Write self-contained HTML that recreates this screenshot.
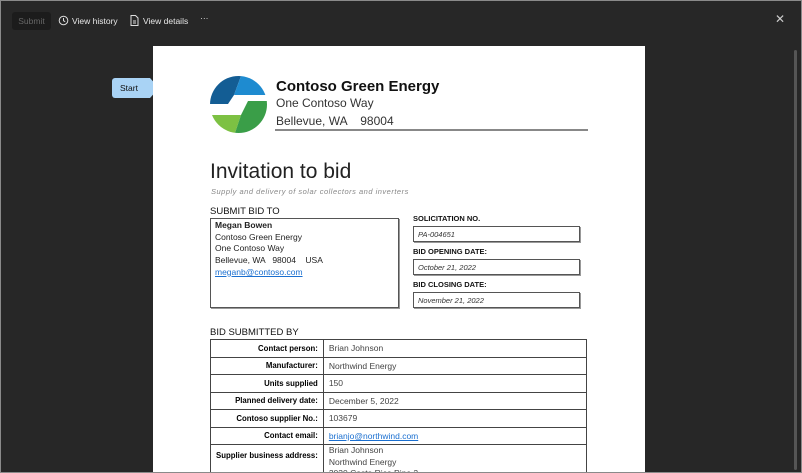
<!DOCTYPE html>
<html style="overflow:hidden"><head><style>
*{margin:0;padding:0;box-sizing:border-box}
html,body{width:802px;height:473px;overflow:hidden}
body{background:#272727;position:relative;font-family:"Liberation Sans",sans-serif}
.frame{position:absolute;left:0;top:0;width:802px;height:473px;border:1px solid #8a8a8a;pointer-events:none}
.a{position:absolute}
.tb{color:#e8e8e8;font-size:8.5px;top:16px}
.page{left:153px;top:46px;width:492px;height:427px;background:#fff}
.p{color:#111;font-family:"Liberation Sans",sans-serif}
.box{border:1px solid #555;box-shadow:1px 1px 0 #999}
table{border-collapse:collapse;position:absolute;left:210px;top:339px;width:377px;font-size:8.5px}
td{border:1px solid #444;height:17.5px;padding:0 5px}
td.l{text-align:right;font-weight:bold;width:112px;font-size:7.8px;white-space:nowrap}
td.v{color:#444}
a{color:#1a6fd0;text-decoration:underline}
</style></head><body>
<div class="a" style="left:12px;top:12px;width:39px;height:18px;background:#1c1c1c;border-radius:3px;color:#666;font-size:8.5px;text-align:center;line-height:18px">Submit</div>
<svg class="a" style="left:58px;top:15px" width="11" height="11" viewBox="0 0 11 11"><circle cx="5.5" cy="5.5" r="4.3" fill="none" stroke="#ddd" stroke-width="1"/><path d="M5.5 3v2.7l1.7 1" fill="none" stroke="#ddd"/></svg>
<div class="a tb" style="left:72px">View history</div>
<svg class="a" style="left:130px;top:15px" width="9" height="11" viewBox="0 0 9 11"><path d="M1 .5h4.5L8 3v7.5H1z" fill="none" stroke="#ddd"/><path d="M3 6h3M3 8h3" stroke="#ddd"/></svg>
<div class="a tb" style="left:143px">View details</div>
<div class="a tb" style="left:200px;top:13px">···</div>
<div class="a" style="left:775px;top:12px;color:#ccc;font-size:12px">✕</div>
<div class="a" style="left:794px;top:50px;width:3px;height:420px;background:#555;border-radius:2px"></div>
<div class="a" style="left:112px;top:78px;width:38px;height:20px;background:#a9d3f5;border-radius:3px 0 0 3px;font-size:8.5px;line-height:20px;padding-left:8px;color:#111">Start</div>
<div class="a" style="left:150px;top:78px;width:0;height:0;border-top:10px solid transparent;border-bottom:10px solid transparent;border-left:9px solid #a9d3f5"></div>
<div class="a page"></div>
<svg class="a" style="left:210px;top:76px" width="57" height="57" viewBox="0 0 57 57">
<defs><clipPath id="c"><circle cx="28.5" cy="28.5" r="28.5"/></clipPath></defs>
<g clip-path="url(#c)">
<polygon points="0,0 31,0 24,19 18,28 0,28" fill="#135d94"/>
<polygon points="31,0 57,0 57,19 24,19" fill="#1e8bd0"/>
<polygon points="0,39 31,39 25,57 0,57" fill="#7dc143"/>
<polygon points="38,25 57,25 57,57 25,57 31,39" fill="#3a9e48"/>
</g></svg>
<div class="a p" style="left:276px;top:78px;font-size:15px;font-weight:bold">Contoso Green Energy</div>
<div class="a p" style="left:276px;top:96px;font-size:12px;color:#333">One Contoso Way</div>
<div class="a p" style="left:276px;top:114px;font-size:12px;color:#333">Bellevue, WA &nbsp;&nbsp; 98004</div>
<div class="a" style="left:275px;top:129px;width:313px;height:2px;background:#888"></div>
<div class="a p" style="left:210px;top:160px;font-size:21px;color:#222">Invitation to bid</div>
<div class="a" style="left:211px;top:187px;font-size:7.5px;font-style:italic;color:#888;letter-spacing:.5px">Supply and delivery of solar collectors and inverters</div>
<div class="a p" style="left:210px;top:206px;font-size:9.5px">SUBMIT BID TO</div>
<div class="a box" style="left:210px;top:218px;width:189px;height:90px"></div>
<div class="a p" style="left:215px;top:220px;font-size:8.5px;line-height:11.7px;color:#222"><b>Megan Bowen</b><br>Contoso Green Energy<br>One Contoso Way<br>Bellevue, WA &nbsp; 98004 &nbsp;&nbsp; USA<br><a>meganb@contoso.com</a></div>
<div class="a p" style="left:413px;top:214px;font-size:7.5px;font-weight:bold">SOLICITATION NO.</div>
<div class="a box" style="left:413px;top:226px;width:167px;height:16px"></div>
<div class="a" style="left:418px;top:230px;font-size:7.5px;font-style:italic;color:#333">PA-004651</div>
<div class="a p" style="left:413px;top:247px;font-size:7.5px;font-weight:bold">BID OPENING DATE:</div>
<div class="a box" style="left:413px;top:259px;width:167px;height:16px"></div>
<div class="a" style="left:418px;top:263px;font-size:7.5px;font-style:italic;color:#333">October 21, 2022</div>
<div class="a p" style="left:413px;top:280px;font-size:7.5px;font-weight:bold">BID CLOSING DATE:</div>
<div class="a box" style="left:413px;top:292px;width:167px;height:16px"></div>
<div class="a" style="left:418px;top:296px;font-size:7.5px;font-style:italic;color:#333">November 21, 2022</div>
<div class="a p" style="left:210px;top:327px;font-size:9.5px">BID SUBMITTED BY</div>
<table>
<tr><td class="l">Contact person:</td><td class="v">Brian Johnson</td></tr>
<tr><td class="l">Manufacturer:</td><td class="v">Northwind Energy</td></tr>
<tr><td class="l">Units supplied</td><td class="v">150</td></tr>
<tr><td class="l">Planned delivery date:</td><td class="v">December 5, 2022</td></tr>
<tr><td class="l">Contoso supplier No.:</td><td class="v">103679</td></tr>
<tr><td class="l">Contact email:</td><td class="v"><a>brianjo@northwind.com</a></td></tr>
<tr><td class="l" style="vertical-align:top;padding-top:6px;height:40px">Supplier business address:</td><td class="v" style="vertical-align:top;line-height:11.5px">Brian Johnson<br>Northwind Energy<br>3030 Costa Rica Pine 2</td></tr>
</table>
<div class="frame"></div>
</body></html>
